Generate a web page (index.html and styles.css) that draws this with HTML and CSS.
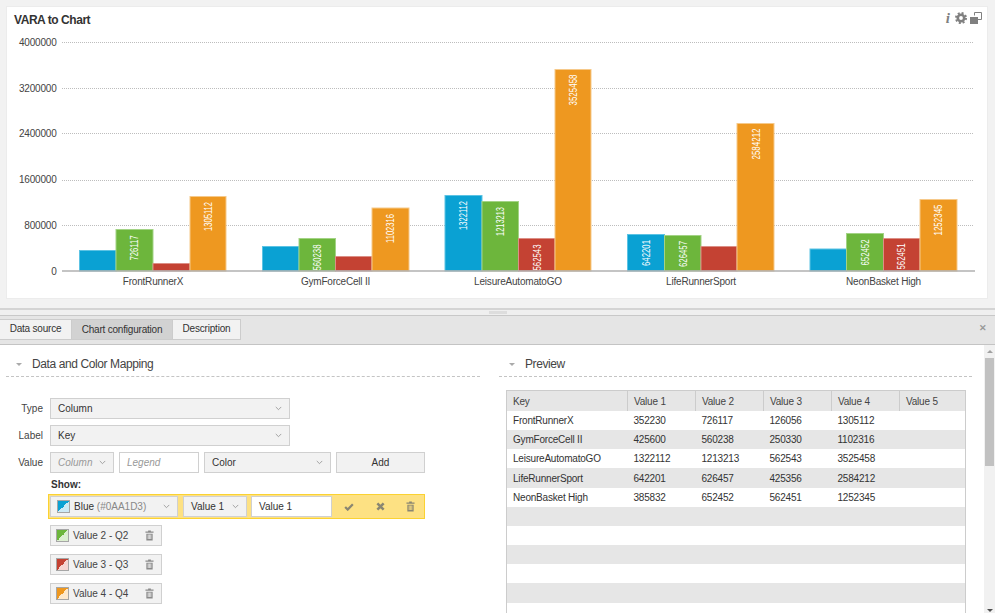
FILE: index.html
```html
<!DOCTYPE html>
<html lang="en">
<head>
    <meta charset="UTF-8">
    <title>VARA to Chart</title>
    <link rel="stylesheet" href="styles.css">
</head>

<body>
    <svg class="defs" width="0" height="0">
        <symbol id="chevron" viewBox="0 0 9 6">
            <path d="M1 1l3.5 3.5L8 1" fill="none" stroke="#8c8c8c" stroke-width="1"/>
        </symbol>
        <symbol id="trash" viewBox="0 0 10 12">
            <path d="M3.5 1.5V.5h3v1H9.500v1.500h-9V1.500z" fill="currentColor"/>
            <path d="M1.500 4h7v7.500h-7z M3 5v5h1V5z M4.600 5v5h.8V5z M6 5v5h1V5z" fill="currentColor" fill-rule="evenodd"/>
        </symbol>
    </svg>

    <div class="chart-area">
        <div class="card">
            <div class="card-head">
                <h1>VARA to Chart</h1>
                <div class="card-tools">
                    <span class="tool-info">i</span>
                    <svg width="12" height="12" viewBox="0 0 12 12">
                        <circle cx="6" cy="6" r="3.200" fill="none" stroke="#808080" stroke-width="2.600"/>
                        <circle cx="6" cy="6" r="5" fill="none" stroke="#808080" stroke-width="2" stroke-dasharray="2 1.930"/>
                    </svg>
                    <svg width="12" height="12" viewBox="0 0 12 12">
                        <path d="M4.500 .5h7v7H8" fill="none" stroke="#808080"/>
                        <path d="M4.500 .5v3" fill="none" stroke="#808080"/>
                        <rect x="0" y="5" width="8" height="7" fill="#808080"/>
                    </svg>
                </div>
            </div>
            <svg class="chart" width="980" height="266" viewBox="7 32 980 266">
                <g class="grid">
                    <line x1="62" x2="974" y1="42.500" y2="42.500"/>
                    <line x1="62" x2="974" y1="88.500" y2="88.500"/>
                    <line x1="62" x2="974" y1="133.500" y2="133.500"/>
                    <line x1="62" x2="974" y1="180.500" y2="180.500"/>
                    <line x1="62" x2="974" y1="225.500" y2="225.500"/>
                </g>
                <g class="y-labels">
                    <text x="56.500" y="46">4000000</text>
                    <text x="56.500" y="91.500">3200000</text>
                    <text x="56.500" y="137">2400000</text>
                    <text x="56.500" y="183">1600000</text>
                    <text x="56.500" y="228.500">800000</text>
                    <text x="56.500" y="274.500">0</text>
                </g>

                <!-- FrontRunnerX -->
                <rect class="bar blue" x="79.500" y="250.500" width="36.500" height="20.500"/>
                <rect class="bar green" x="116" y="229.500" width="37" height="41.500"/>
                <rect class="bar red" x="153" y="263.500" width="37" height="7.500"/>
                <rect class="bar orange" x="190" y="196.500" width="36" height="74.500"/>
                <!-- GymForceCell II -->
                <rect class="bar blue" x="262.500" y="246.500" width="36.500" height="24.500"/>
                <rect class="bar green" x="299" y="238.500" width="36.500" height="32.500"/>
                <rect class="bar red" x="335.500" y="256.500" width="36.500" height="14.500"/>
                <rect class="bar orange" x="372" y="208" width="37" height="63"/>
                <!-- LeisureAutomatoGO -->
                <rect class="bar blue" x="445" y="195.500" width="37" height="75.500"/>
                <rect class="bar green" x="482" y="201.500" width="36.500" height="69.500"/>
                <rect class="bar red" x="518.500" y="238.500" width="36.500" height="32.500"/>
                <rect class="bar orange" x="555" y="69.500" width="36" height="201.500"/>
                <!-- LifeRunnerSport -->
                <rect class="bar blue" x="627.500" y="234.500" width="37" height="36.500"/>
                <rect class="bar green" x="664.500" y="235.500" width="36.500" height="35.500"/>
                <rect class="bar red" x="701" y="246.500" width="36" height="24.500"/>
                <rect class="bar orange" x="737" y="123.500" width="37" height="147.500"/>
                <!-- NeonBasket High -->
                <rect class="bar blue" x="810" y="249" width="36.500" height="22"/>
                <rect class="bar green" x="846.500" y="233.500" width="37" height="37.500"/>
                <rect class="bar red" x="883.500" y="238.500" width="36.500" height="32.500"/>
                <rect class="bar orange" x="920" y="199.500" width="37" height="71.500"/>

                <line class="axis" x1="62" x2="975" y1="271" y2="271"/>

                <g class="bar-labels">
                    <text transform="translate(138 235.500) rotate(-90)" textLength="25" lengthAdjust="spacingAndGlyphs">726117</text>
                    <text transform="translate(211.500 202) rotate(-90)" textLength="29" lengthAdjust="spacingAndGlyphs">1305112</text>
                    <text transform="translate(321 244.500) rotate(-90)" textLength="26" lengthAdjust="spacingAndGlyphs">560238</text>
                    <text transform="translate(394 214) rotate(-90)" textLength="29" lengthAdjust="spacingAndGlyphs">1102316</text>
                    <text transform="translate(467 201) rotate(-90)" textLength="29" lengthAdjust="spacingAndGlyphs">1322112</text>
                    <text transform="translate(504 207) rotate(-90)" textLength="29" lengthAdjust="spacingAndGlyphs">1213213</text>
                    <text transform="translate(540.500 244.500) rotate(-90)" textLength="26" lengthAdjust="spacingAndGlyphs">562543</text>
                    <text transform="translate(577 74.500) rotate(-90)" textLength="31" lengthAdjust="spacingAndGlyphs">3525458</text>
                    <text transform="translate(649.500 240) rotate(-90)" textLength="26" lengthAdjust="spacingAndGlyphs">642201</text>
                    <text transform="translate(686.500 241) rotate(-90)" textLength="26" lengthAdjust="spacingAndGlyphs">626457</text>
                    <text transform="translate(759.500 128.500) rotate(-90)" textLength="31" lengthAdjust="spacingAndGlyphs">2584212</text>
                    <text transform="translate(868.500 239.500) rotate(-90)" textLength="26" lengthAdjust="spacingAndGlyphs">652452</text>
                    <text transform="translate(905 243.500) rotate(-90)" textLength="26" lengthAdjust="spacingAndGlyphs">562451</text>
                    <text transform="translate(942 204.500) rotate(-90)" textLength="31" lengthAdjust="spacingAndGlyphs">1252345</text>
                </g>

                <g class="x-labels">
                    <text x="153" y="285">FrontRunnerX</text>
                    <text x="335.500" y="285">GymForceCell II</text>
                    <text x="518" y="285">LeisureAutomatoGO</text>
                    <text x="701" y="285">LifeRunnerSport</text>
                    <text x="883.500" y="285">NeonBasket High</text>
                </g>
            </svg>
        </div>
    </div>

    <div class="splitter"><span class="grip"></span></div>

    <div class="tabs">
        <a class="tab tab-source">Data source</a>
        <a class="tab tab-active">Chart configuration</a>
        <a class="tab tab-desc">Description</a>
        <span class="tabs-close">✕</span>
    </div>

    <div class="config">
        <div class="config-main">
            <section class="section">
                <div class="section-head"><span class="arrow"></span>Data and Color Mapping</div>
                <div class="form">
                    <div class="field">
                        <label>Type</label>
                        <div class="select w-full">Column<svg><use href="#chevron"/></svg></div>
                    </div>
                    <div class="field">
                        <label>Label</label>
                        <div class="select w-full">Key<svg><use href="#chevron"/></svg></div>
                    </div>
                    <div class="field">
                        <label>Value</label>
                        <div class="select w-column placeholder">Column<svg><use href="#chevron"/></svg></div>
                        <div class="input w-legend placeholder">Legend</div>
                        <div class="select w-color">Color<svg><use href="#chevron"/></svg></div>
                        <div class="btn-add">Add</div>
                    </div>

                    <div class="show-title">Show:</div>
                    <div class="edit-row">
                        <div class="select w-swatch">
                            <span class="swatch swatch-blue"></span>
                            <span class="swatch-text">Blue <em>(#0AA1D3)</em></span>
                            <svg><use href="#chevron"/></svg>
                        </div>
                        <div class="select w-value">Value 1<svg><use href="#chevron"/></svg></div>
                        <div class="input w-name">Value 1</div>
                        <div class="edit-actions">
                            <svg width="10" height="8" viewBox="0 0 12 10"><path d="M1.200 5l3.200 3.200L10.800 1.500" fill="none" stroke="currentColor" stroke-width="2.800"/></svg>
                            <svg width="9" height="9" viewBox="0 0 10 10"><path d="M1.500 1.500l7 7M8.500 1.500l-7 7" fill="none" stroke="currentColor" stroke-width="2.800"/></svg>
                            <svg width="9" height="11"><use href="#trash"/></svg>
                        </div>
                    </div>
                    <div class="item">
                        <span class="swatch swatch-green"></span>
                        <span class="item-text">Value 2 - Q2</span>
                        <svg width="9" height="11"><use href="#trash"/></svg>
                    </div>
                    <div class="item">
                        <span class="swatch swatch-red"></span>
                        <span class="item-text">Value 3 - Q3</span>
                        <svg width="9" height="11"><use href="#trash"/></svg>
                    </div>
                    <div class="item">
                        <span class="swatch swatch-orange"></span>
                        <span class="item-text">Value 4 - Q4</span>
                        <svg width="9" height="11"><use href="#trash"/></svg>
                    </div>
                </div>
            </section>

            <section class="section">
                <div class="section-head"><span class="arrow"></span>Preview</div>
                <table class="preview">
                    <colgroup>
                        <col class="col-key"><col class="col-val"><col class="col-val"><col class="col-val"><col class="col-val"><col class="col-last">
                    </colgroup>
                    <thead>
                        <tr><th>Key</th><th>Value 1</th><th>Value 2</th><th>Value 3</th><th>Value 4</th><th>Value 5</th></tr>
                    </thead>
                    <tbody>
                        <tr><td>FrontRunnerX</td><td>352230</td><td>726117</td><td>126056</td><td>1305112</td><td></td></tr>
                        <tr><td>GymForceCell II</td><td>425600</td><td>560238</td><td>250330</td><td>1102316</td><td></td></tr>
                        <tr><td>LeisureAutomatoGO</td><td>1322112</td><td>1213213</td><td>562543</td><td>3525458</td><td></td></tr>
                        <tr><td>LifeRunnerSport</td><td>642201</td><td>626457</td><td>425356</td><td>2584212</td><td></td></tr>
                        <tr><td>NeonBasket High</td><td>385832</td><td>652452</td><td>562451</td><td>1252345</td><td></td></tr>
                        <tr><td></td><td></td><td></td><td></td><td></td><td></td></tr>
                        <tr><td></td><td></td><td></td><td></td><td></td><td></td></tr>
                        <tr><td></td><td></td><td></td><td></td><td></td><td></td></tr>
                        <tr><td></td><td></td><td></td><td></td><td></td><td></td></tr>
                        <tr><td></td><td></td><td></td><td></td><td></td><td></td></tr>
                        <tr><td></td><td></td><td></td><td></td><td></td><td></td></tr>
                    </tbody>
                </table>
            </section>
        </div>

        <div class="scrollbar">
            <span class="scroll-up"></span>
            <span class="scroll-thumb"></span>
            <span class="scroll-down"></span>
        </div>
    </div>
</body>
</html>
```

FILE: styles.css
```css
html, body {
    margin: 0;
    height: 100%;
}

body {
    display: flex;
    flex-direction: column;
    overflow: hidden;
    background-color: #f2f2f2;
    color: #333;
    font-family: "Liberation Sans", Arial, sans-serif;
    font-size: 10px;
}

.defs {
    position: absolute;
}

/* Chart */
.chart-area {
    padding: 7px 8px 10px 7px;
}

.card {
    background-color: #fff;
    box-shadow: 0 0 0 1px #ececec;
}

.card-head {
    display: flex;
    justify-content: space-between;
    align-items: center;
    height: 25px;
    padding: 0 5px 0 7px;
}

.card-head h1 {
    margin: 0;
    font-size: 12px;
    font-weight: bold;
    letter-spacing: -0.45px;
    color: #333;
}

.card-tools {
    display: flex;
    align-items: center;
    gap: 3px;
    margin-top: -3px;
}

.tool-info {
    margin-right: 2px;
    font-family: "Liberation Serif", serif;
    font-size: 15px;
    font-style: italic;
    font-weight: bold;
    line-height: 12px;
    color: #808080;
}

.chart {
    display: block;
}

.grid line {
    stroke: #bdbdbd;
    stroke-width: 1;
    stroke-dasharray: 1 1;
}

.axis {
    stroke: #b0b0b0;
    stroke-width: 1.500;
}

.y-labels text {
    font-size: 10px;
    letter-spacing: -0.2px;
    fill: #444;
    text-anchor: end;
}

.x-labels text {
    font-size: 10px;
    letter-spacing: -0.2px;
    fill: #444;
    text-anchor: middle;
}

.bar-labels text {
    font-size: 10px;
    fill: #fff;
    text-anchor: end;
}

.bar {
    stroke-width: 1;
}

.blue { fill: #0aa1d3; stroke: #5cc3e4; }
.green { fill: #6db63c; stroke: #a3d385; }
.red { fill: #c44233; stroke: #dc8f86; }
.orange { fill: #ee9820; stroke: #f6c98a; }

/* Splitter + tabs */
.splitter {
    display: flex;
    justify-content: center;
    align-items: center;
    flex: none;
    height: 5px;
    border-top: 2px solid #d4d4d4;
    border-bottom: 1px solid #c8c8c8;
    background-color: #efefef;
}

.grip {
    width: 18px;
    height: 3px;
    background-color: #ddd;
}

.tabs {
    display: flex;
    flex: none;
    align-items: flex-start;
    height: 25px;
    padding-top: 3px;
    border-bottom: 1px solid #c4c4c4;
    background-color: #e5e5e5;
    letter-spacing: -0.2px;
}

.tab {
    box-sizing: border-box;
    height: 21px;
    line-height: 17px;
    text-align: center;
    border: 1px solid #ccc;
    border-left-width: 0;
    background-color: #f2f2f2;
    color: #333;
}

.tab-source { width: 72px; }
.tab-desc { width: 68px; }

.tab-active {
    width: 101px;
    padding-top: 1px;
    background-color: #d2d2d2;
}

.tabs-close {
    margin-left: auto;
    margin-right: 8px;
    margin-top: 4px;
    font-size: 9px;
    font-weight: bold;
    color: #999;
}

/* Configuration panel */
.config {
    display: flex;
    flex: 1;
    min-height: 0;
    background-color: #fff;
}

.config-main {
    display: grid;
    grid-template-columns: 474px 473px;
    gap: 19px;
    flex: 1;
    align-content: start;
    padding-left: 6px;
}

.section-head {
    display: flex;
    align-items: center;
    height: 32px;
    padding-top: 7px;
    box-sizing: border-box;
    border-bottom: 1px dashed #c4c4c4;
    font-size: 12px;
    letter-spacing: -0.4px;
    color: #444;
}

.arrow {
    width: 0;
    height: 0;
    margin: 0 10px 0 10px;
    border-left: 3px solid transparent;
    border-right: 3px solid transparent;
    border-top: 3px solid #aaa;
}

.form {
    padding-top: 21px;
}

.field {
    display: flex;
    align-items: center;
    gap: 5px;
    margin-bottom: 6px;
}

.field label {
    width: 37px;
    margin-right: 2px;
    text-align: right;
    color: #444;
}

.select,
.input,
.btn-add {
    display: flex;
    align-items: center;
    flex: none;
    box-sizing: border-box;
    height: 21px;
    padding: 0 7px;
    border: 1px solid #d0d0d0;
    background-color: #f2f2f2;
    color: #333;
}

.select svg {
    flex: none;
    width: 7px;
    height: 5px;
    margin-left: auto;
}

.input {
    background-color: #fff;
}

.placeholder {
    font-style: italic;
    color: #999;
}

.w-full { width: 240px; }
.w-column { width: 64px; }
.w-legend { width: 80px; }
.w-color { width: 127px; }
.w-swatch { width: 128px; padding-left: 6px; }
.w-value { width: 64px; }
.w-name { width: 81px; }

.btn-add {
    justify-content: center;
    width: 89px;
}

.show-title {
    margin: 6px 0 3px 45px;
    line-height: 12px;
    font-weight: bold;
}

.edit-row {
    display: flex;
    align-items: center;
    gap: 5px;
    box-sizing: border-box;
    width: 377px;
    height: 25px;
    margin-left: 42px;
    padding-left: 1px;
    border: 1px solid #fbd232;
    background-color: #fde183;
}

.edit-row .w-value {
    margin-right: -1px;
}

.edit-actions {
    display: flex;
    align-items: center;
    justify-content: space-between;
    flex: 1;
    padding: 0 9px 0 7px;
    color: #8a8672;
}

.swatch {
    flex: none;
    box-sizing: border-box;
    width: 13px;
    height: 13px;
    margin-right: 4px;
    border: 1px solid #a6a6a6;
}

.swatch-blue { background: linear-gradient(135deg, #0aa1d3 50%, #cdeaf5 50%); }
.swatch-green { background: linear-gradient(135deg, #6db63c 50%, #dcefd0 50%); }
.swatch-red { background: linear-gradient(135deg, #c44233 50%, #f5d5d1 50%); }
.swatch-orange { background: linear-gradient(135deg, #ee9820 50%, #fde9cd 50%); }

.swatch-text em {
    font-style: normal;
    color: #888;
}

.item {
    display: flex;
    align-items: center;
    box-sizing: border-box;
    width: 112px;
    height: 21px;
    margin: 6px 0 0 44px;
    padding: 0 7px 0 5px;
    border: 1px solid #d0d0d0;
    background-color: #f2f2f2;
    color: #8a8a8a;
}

.edit-row + .item {
    margin-top: 6px;
}

.item + .item {
    margin-top: 8px;
}

.item-text {
    flex: 1;
    color: #444;
}

/* Preview table */
.preview {
    width: 459px;
    margin: 13px 0 0 7px;
    border: 1px solid #ccc;
    border-collapse: collapse;
    table-layout: fixed;
    letter-spacing: -0.2px;
}

.col-key { width: 121px; }
.col-val { width: 68px; }
.col-last { width: 66px; }

.preview th {
    height: 20px;
    padding: 0 6px;
    border-right: 1px solid #ccc;
    background-color: #e6e6e6;
    font-weight: normal;
    text-align: left;
    color: #444;
}

.preview td {
    height: 19.170px;
    padding: 0 6px;
    color: #333;
}

.preview tbody tr:nth-child(even) {
    background-color: #e6e6e6;
}

/* Scrollbar */
.scrollbar {
    display: flex;
    flex-direction: column;
    align-items: center;
    flex: none;
    width: 11px;
    background-color: #f1f1f1;
}

.scroll-up,
.scroll-down {
    width: 0;
    height: 0;
    border-left: 3px solid transparent;
    border-right: 3px solid transparent;
}

.scroll-up {
    margin-top: 5px;
    border-bottom: 3px solid #a0a0a0;
}

.scroll-thumb {
    width: 9px;
    height: 108px;
    margin-top: 5px;
    background-color: #c1c1c1;
}

.scroll-down {
    margin-top: auto;
    margin-bottom: 1px;
    border-top: 3px solid #505050;
}
```
